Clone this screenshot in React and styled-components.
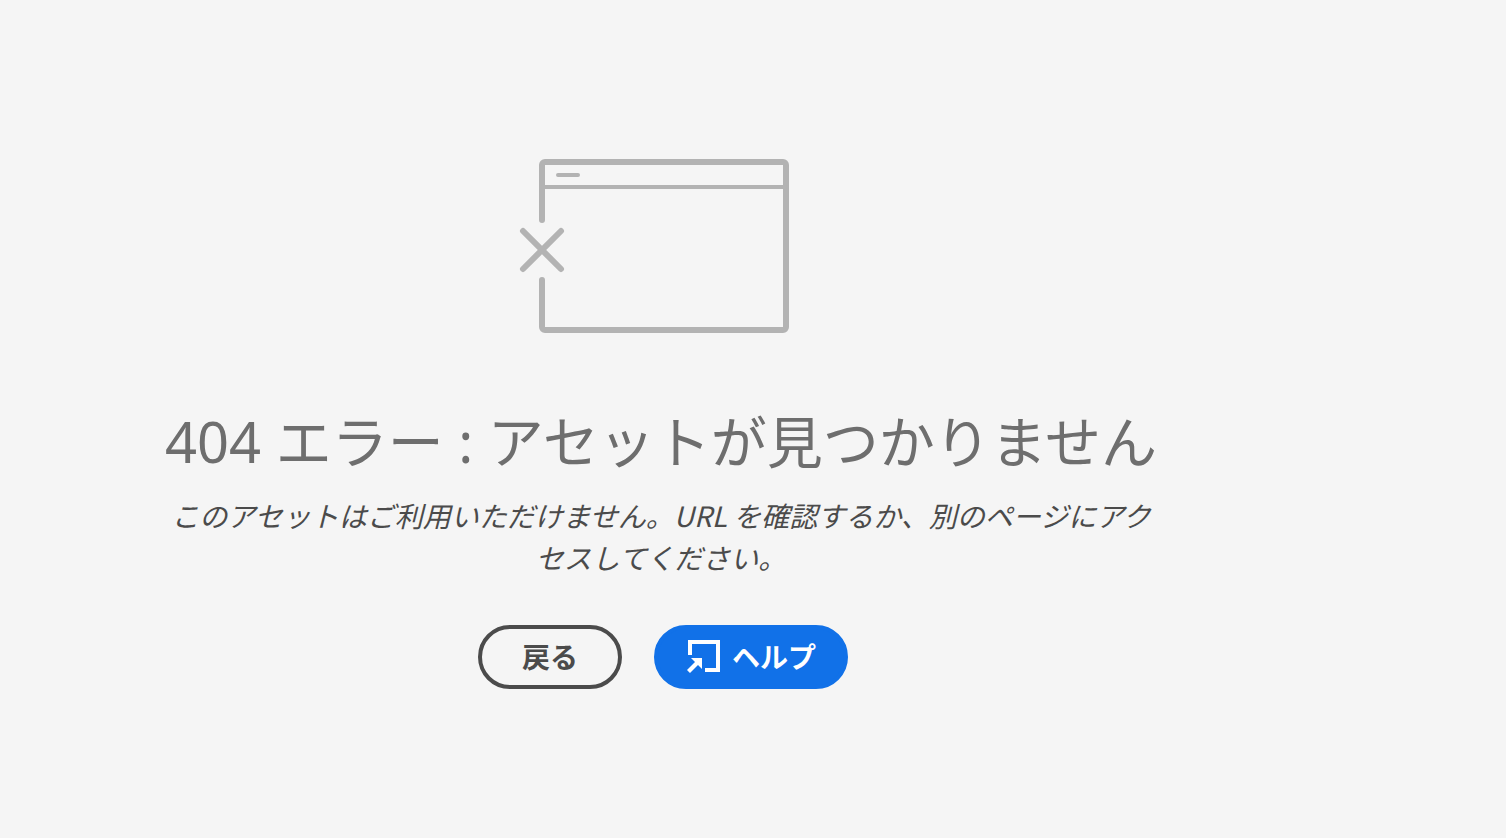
import React from 'react';
import styled, { createGlobalStyle, css } from 'styled-components';

const GlobalStyle = createGlobalStyle`
  *, *::before, *::after { box-sizing: border-box; }
  body {
    margin: 0;
    background: #f5f5f5;
    color: #4b4b4b;
    font-family: "Noto Sans CJK JP", "Noto Sans", sans-serif;
  }
`;

const Page = styled.main`
  display: flex;
  flex-direction: column;
  align-items: center;
  min-height: 100vh;
  padding: 158px 180px 64px 0;
`;

const Illustration = styled.svg`
  display: block;
  width: 290px;
  height: 176px;
  fill: none;
  stroke: #b3b3b3;
  stroke-linecap: round;
  stroke-linejoin: round;
`;

const Message = styled.section`
  width: 100%;
  max-width: 1000px;
  margin-top: 71px;
  padding-right: 4px;
  text-align: center;
`;

const Title = styled.h1`
  margin: 0;
  color: #6e6e6e;
  font-family: "Noto Sans", "Noto Sans CJK JP", sans-serif;
  font-size: 56px;
  font-weight: 400;
  line-height: 72px;
`;

const Description = styled.p`
  margin: 17px 0 0;
  font-size: 28px;
  font-style: italic;
  line-height: 42px;
`;

const Actions = styled.div`
  display: flex;
  flex-wrap: wrap;
  justify-content: center;
  gap: 32px;
  margin-top: 47px;
`;

const Button = styled.button`
  display: inline-flex;
  align-items: center;
  justify-content: center;
  gap: 12px;
  min-width: 144px;
  height: 64px;
  padding: 0 28px 2px;
  border: 4px solid #4b4b4b;
  border-radius: 32px;
  background: transparent;
  color: #4b4b4b;
  font: inherit;
  font-size: 28px;
  font-weight: 700;
  line-height: 40px;
  cursor: pointer;

  ${({ $primary }) => $primary && css`
    border-color: #1171e8;
    background: #1171e8;
    color: #fff;
  `}
`;

const HelpIcon = styled.svg`
  flex: none;
  width: 34px;
  height: 34px;
`;

export default function App() {
  return (
    <>
      <GlobalStyle />
      <Page>
        <Illustration viewBox="0 0 290 176" strokeWidth="6" aria-hidden="true">
          <path d="M24 62V7a3 3 0 0 1 3-3h238a3 3 0 0 1 3 3v162a3 3 0 0 1-3 3H27a3 3 0 0 1-3-3v-47" />
          <path d="M24 29h244M40 17h20" strokeWidth="4" />
          <path d="M5 73l38 38M43 73l-38 38" />
        </Illustration>
        <Message>
          <Title>404 エラー : アセットが見つかりません</Title>
          <Description>
            このアセットはご利用いただけません。URL を確認するか、別のページにアクセスしてください。
          </Description>
        </Message>
        <Actions>
          <Button type="button">戻る</Button>
          <Button type="button" $primary>
            <HelpIcon viewBox="0 0 34 34" aria-hidden="true">
              <path d="M4 16V3h28v28H19" fill="none" stroke="#fff" strokeWidth="4" />
              <path d="M5 19h11v11l-4-4-8 8-3-3 8-8z" fill="#fff" />
            </HelpIcon>
            ヘルプ
          </Button>
        </Actions>
      </Page>
    </>
  );
}
